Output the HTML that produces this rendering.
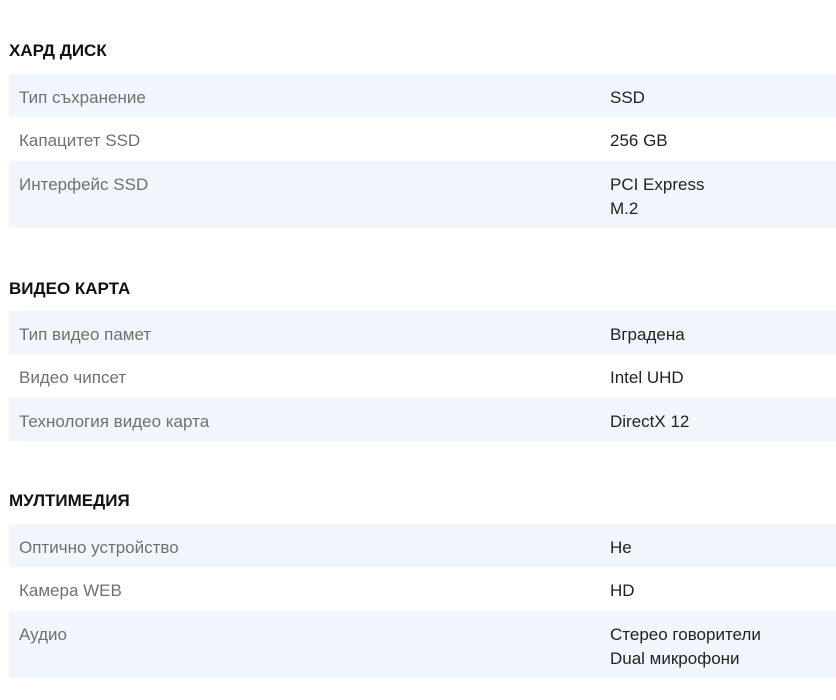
<!DOCTYPE html>
<html><head><meta charset="utf-8"><style>
body{margin:0;width:836px;height:700px;background:#fff;font-family:"Liberation Sans","DejaVu Sans",sans-serif;position:relative;overflow:hidden}
.h{position:absolute;left:9px;font-weight:bold;font-size:17px;color:#111;line-height:24px}
.r{position:absolute;left:9px;width:827px}
.s{background:#f0f6fc}
.l{position:absolute;left:10px;top:12px;font-size:17px;line-height:24px;color:#707070}
.v{position:absolute;left:601px;top:12px;font-size:17px;line-height:24px;color:#222}
</style></head><body>
<div class="h" style="top:39px">ХАРД ДИСК</div>
<div class="r s" style="top:74px;height:43px"><div class="l">Тип съхранение</div><div class="v">SSD</div></div>
<div class="r" style="top:117px;height:44px"><div class="l">Капацитет SSD</div><div class="v">256 GB</div></div>
<div class="r s" style="top:161px;height:67px"><div class="l">Интерфейс SSD</div><div class="v">PCI Express<br>M.2</div></div>

<div class="h" style="top:277px">ВИДЕО КАРТА</div>
<div class="r s" style="top:311px;height:43px"><div class="l">Тип видео памет</div><div class="v">Вградена</div></div>
<div class="r" style="top:354px;height:44px"><div class="l">Видео чипсет</div><div class="v">Intel UHD</div></div>
<div class="r s" style="top:398px;height:43px"><div class="l">Технология видео карта</div><div class="v">DirectX 12</div></div>

<div class="h" style="top:489px">МУЛТИМЕДИЯ</div>
<div class="r s" style="top:524px;height:43px"><div class="l">Оптично устройство</div><div class="v">Не</div></div>
<div class="r" style="top:567px;height:44px"><div class="l">Камера WEB</div><div class="v">HD</div></div>
<div class="r s" style="top:611px;height:67px"><div class="l">Аудио</div><div class="v">Стерео говорители<br>Dual микрофони</div></div>
</body></html>
